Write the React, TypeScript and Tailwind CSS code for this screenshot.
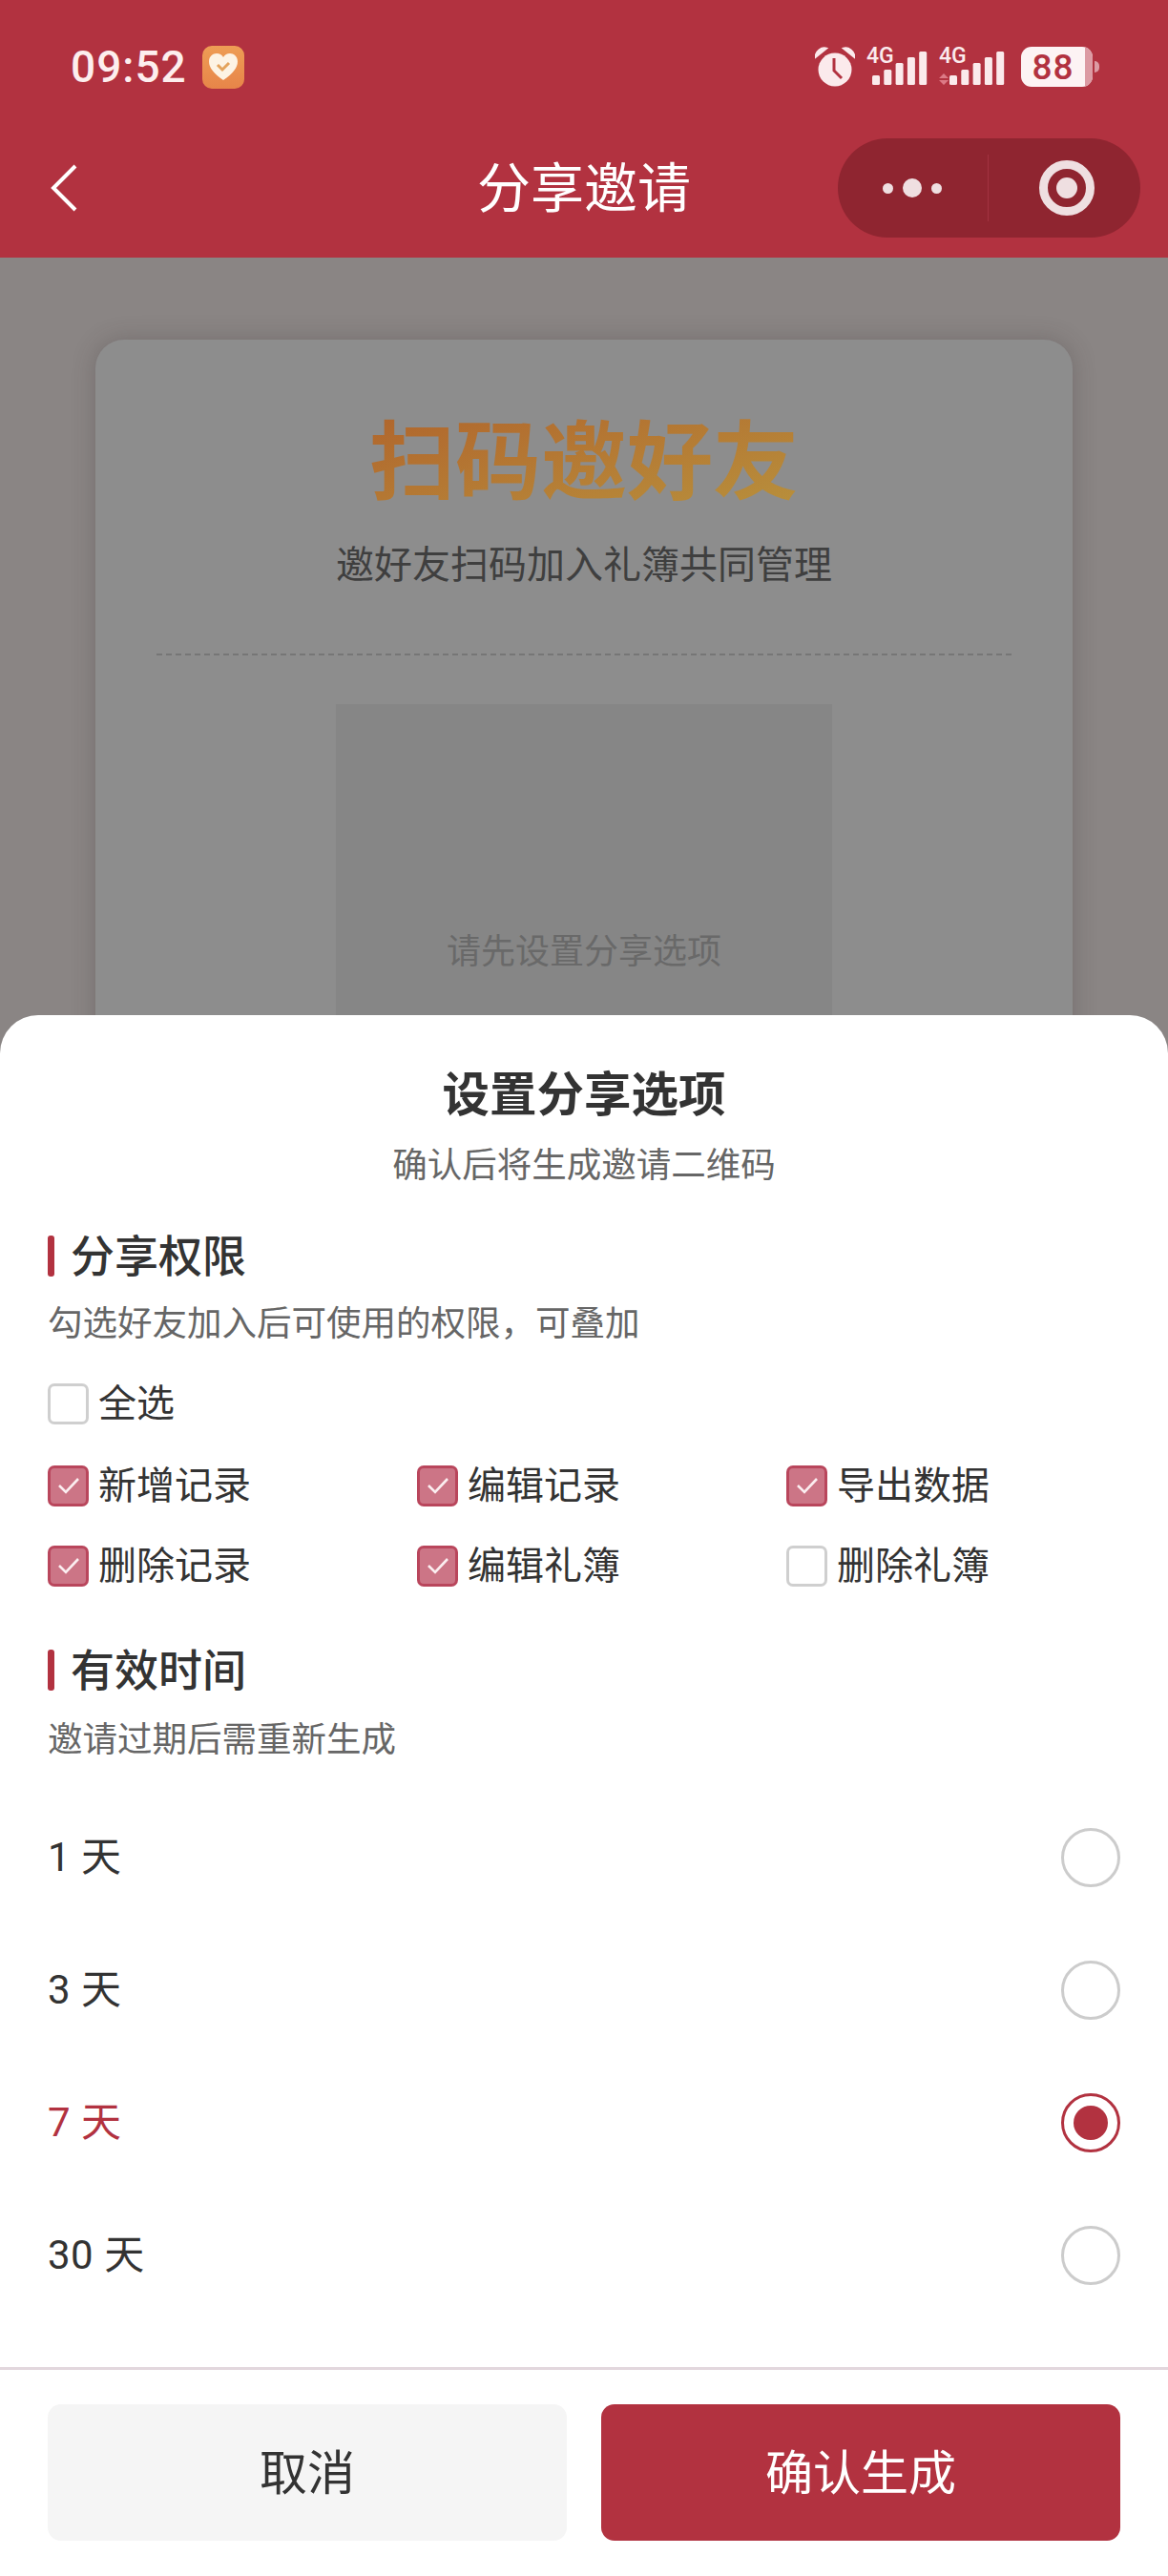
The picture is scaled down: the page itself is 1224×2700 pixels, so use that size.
const permissions = [
  { label: '新增记录', checked: true },
  { label: '编辑记录', checked: true },
  { label: '导出数据', checked: true },
  { label: '删除记录', checked: true },
  { label: '编辑礼簿', checked: true },
  { label: '删除礼簿', checked: false },
]

const durations = [
  { label: '1 天', selected: false },
  { label: '3 天', selected: false },
  { label: '7 天', selected: true },
  { label: '30 天', selected: false },
]

function Checkbox({ label, checked }: { label: string; checked: boolean }) {
  return (
    <div className="flex h-[56px] items-center gap-[10px]">
      {checked ? (
        <span className="flex h-[43px] w-[43px] items-center justify-center rounded-[7px] border-[3px] border-[#b9465c] bg-[#cc7586]">
          <svg width="26" height="22" viewBox="0 0 26 22" fill="none">
            <path d="M3 11l7 7L23 4" stroke="#fbeef0" strokeWidth="2.6" />
          </svg>
        </span>
      ) : (
        <span className="h-[43px] w-[43px] rounded-[7px] border-[3px] border-[#cfcfcf] bg-white" />
      )}
      <span className="pt-[2px] text-[40px] leading-[54px] text-[#333333]">{label}</span>
    </div>
  )
}

function SectionTitle({ title }: { title: string }) {
  return (
    <div className="flex h-[60px] items-center gap-[17px]">
      <span className="h-[43px] w-[7px] rounded-[3px] bg-[#b23240]" />
      <span className="pt-[2px] text-[46px] font-medium leading-[58px] text-[#333333]">{title}</span>
    </div>
  )
}

function Signal({ arrows }: { arrows?: boolean }) {
  const left = arrows ? 11 : 6
  const heights = [10, 16, 23, 29, 35]
  return (
    <svg width={left + 58} height="50" viewBox={`0 -4 ${left + 58} 50`} fill="#fbeaec">
      <text x="0" y="17" fontSize="23" fontWeight="500" fontFamily="Roboto, sans-serif">4G</text>
      {arrows && <path d="M0 33l5-5 5 5zM0 35l5 5 5-5z" fill="#dc7a86" />}
      {heights.map((h, i) => (
        <rect key={h} x={left + i * 12.300} y={40 - h} width="8" height={h} rx="1.500" />
      ))}
    </svg>
  )
}

export default function App() {
  return (
    <div className="relative h-[2700px] w-[1224px] overflow-hidden bg-[#8a8584] font-['Roboto','Noto_Sans_CJK_SC',sans-serif]">
      {/* Header */}
      <div className="h-[270px] bg-[#b23240]">
        <div className="flex h-[140px] items-center justify-between pl-[74px] pr-[72px]">
          <div className="flex items-center gap-[16px]">
            <span className="text-[46px] font-medium leading-none tracking-[1px] text-[#fdeeee]">09:52</span>
            <span className="flex h-[45px] w-[44px] items-center justify-center rounded-[10px] bg-linear-to-b from-[#ee9d55] to-[#e78549]">
              <svg width="32" height="30" viewBox="0 0 32 30">
                <path d="M16 29C6 22 1 16 1 9.500C1 4 5 1 9 1c3 0 5.500 1.500 7 4 1.500-2.500 4-4 7-4 4 0 8 3 8 8.500C31 16 26 22 16 29z" fill="#fdf3e4" />
                <path d="M10 13l5 5 7-7" fill="none" stroke="#e4a35c" strokeWidth="3" />
              </svg>
            </span>
          </div>
          <div className="flex items-center">
            <svg width="42" height="42" viewBox="0 0 42 42" fill="#fbeaec">
              <circle cx="21" cy="24" r="17.500" />
              <path d="M1 10c1-5 6-9 10-8L1 10zM41 10c-1-5-6-9-10-8l10 8z" stroke="#fbeaec" strokeWidth="3" />
              <path d="M20 12v13l8 8" fill="none" stroke="#b23240" strokeWidth="3" />
            </svg>
            <span className="ml-[12px] flex"><Signal /></span>
            <span className="ml-[12px] flex"><Signal arrows /></span>
            <div className="ml-[17px] flex items-center">
              <span className="flex h-[42px] w-[75px] items-center overflow-hidden rounded-[11px] bg-[#fdf3f4]">
                <span className="flex h-full w-[67px] items-center justify-center text-[37px] font-medium leading-none tracking-[1px] text-[#b23240]">88</span>
                <span className="h-full w-[8px] bg-[#dc9aa3]" />
              </span>
              <span className="ml-[2px] h-[12px] w-[5px] rounded-r-[5px] bg-[#dc9aa3]" />
            </div>
          </div>
        </div>
        <div className="grid h-[114px] grid-cols-[1fr_auto_1fr] items-center">
          <div className="pl-[52px]">
            <svg width="30" height="50" viewBox="0 0 30 50" fill="none">
              <path d="M27 2L4 25l23 23" stroke="#ffffff" strokeWidth="4" />
            </svg>
          </div>
          <div className="pt-[2px] text-[56px] leading-none text-white">分享邀请</div>
          <div className="flex justify-end pr-[29px]">
            <div className="flex h-[104px] w-[317px] items-center rounded-[52px] bg-[#8f2530]">
              <div className="flex h-[70px] w-[158px] items-center justify-end gap-[10px] border-r border-[#a23340] pr-[48px]">
                <span className="h-[11px] w-[11px] rounded-full bg-[#efdfe1]" />
                <span className="h-[20px] w-[20px] rounded-full bg-[#efdfe1]" />
                <span className="h-[11px] w-[11px] rounded-full bg-[#efdfe1]" />
              </div>
              <div className="flex flex-1 justify-center pl-[5px]">
                <span className="flex h-[58px] w-[58px] items-center justify-center rounded-full border-[9px] border-[#efdfe1]">
                  <span className="h-[22px] w-[22px] rounded-full bg-[#efdfe1]" />
                </span>
              </div>
            </div>
          </div>
        </div>
      </div>

      {/* Invite card behind the sheet */}
      <div className="mx-[100px] mt-[86px] flex h-[1100px] flex-col items-center rounded-[30px] bg-[#8d8d8d] px-[64px] pt-[72px] shadow-[0_0_24px_rgba(60,50,50,0.28)]">
        <div className="bg-linear-to-br from-[#b0642c] to-[#b8923d] bg-clip-text text-[90px] font-bold leading-[116px] text-transparent">扫码邀好友</div>
        <div className="mt-[21px] text-[40px] leading-[56px] text-[#3f3f3f]">邀好友扫码加入礼簿共同管理</div>
        <div className="mt-[64px] w-full border-t-2 border-dashed border-[#767676]" />
        <div className="mt-[51px] flex h-[520px] w-[520px] items-center justify-center bg-[#868686] text-[36px] text-[#696969]">
          请先设置分享选项
        </div>
      </div>

      {/* Bottom sheet */}
      <div className="absolute inset-x-0 bottom-0 flex h-[1636px] flex-col rounded-t-[40px] bg-white">
        <div className="px-[50px] pt-[52px]">
          <div className="text-center text-[49.500px] font-bold leading-[64px] text-[#333333]">设置分享选项</div>
          <div className="mt-[18px] text-center text-[36.500px] leading-[48px] text-[#666666]">确认后将生成邀请二维码</div>

          <div className="mt-[40px]">
            <SectionTitle title="分享权限" />
          </div>
          <div className="mt-[18px] text-[36.500px] leading-[48px] text-[#666666]">勾选好友加入后可使用的权限，可叠加</div>
          <div className="mt-[31px]">
            <Checkbox label="全选" checked={false} />
          </div>
          <div className="mt-[30px] grid grid-cols-[387px_387px_1fr] gap-y-[28px]">
            {permissions.map((item) => (
              <Checkbox key={item.label} label={item.label} checked={item.checked} />
            ))}
          </div>

          <div className="mt-[51px]">
            <SectionTitle title="有效时间" />
          </div>
          <div className="mt-[20px] text-[36.500px] leading-[48px] text-[#666666]">邀请过期后需重新生成</div>
          <div className="mt-[29px]">
            {durations.map((item) => (
              <div key={item.label} className="flex h-[139px] items-center justify-between">
                <span className={item.selected ? 'text-[42px] tracking-[0.5px] text-[#b23240]' : 'text-[42px] tracking-[0.5px] text-[#333333]'}>{item.label}</span>
                {item.selected ? (
                  <span className="flex h-[62px] w-[62px] items-center justify-center rounded-full border-[3px] border-[#b23240]">
                    <span className="h-[36px] w-[36px] rounded-full bg-[#b23240]" />
                  </span>
                ) : (
                  <span className="h-[62px] w-[62px] rounded-full border-[3px] border-[#cccccc]" />
                )}
              </div>
            ))}
          </div>
        </div>

        {/* Footer */}
        <div className="mt-[48px] flex gap-[36px] border-t-[3px] border-[#e2d7dd] px-[50px] pt-[36px]">
          <div className="flex h-[143px] flex-1 items-center justify-center rounded-[14px] bg-[#f5f5f5] pt-[4px] text-[50px] text-[#333333]">取消</div>
          <div className="flex h-[143px] flex-1 items-center justify-center rounded-[14px] bg-[#b23240] pt-[4px] text-[50px] text-white">确认生成</div>
        </div>
      </div>
    </div>
  )
}
